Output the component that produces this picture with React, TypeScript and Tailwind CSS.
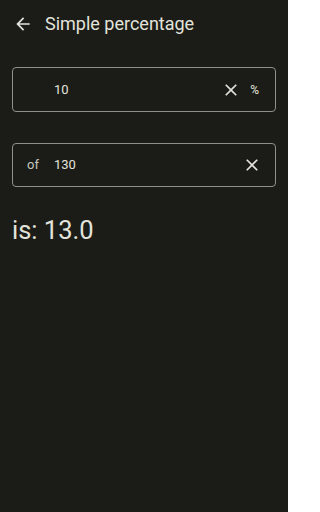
const font = { fontFamily: "Roboto, 'Liberation Sans', sans-serif" }

function ArrowBack() {
  return (
    <svg viewBox="0 0 24 24" className="h-5 w-5" fill="#e3e3db">
      <path d="M20 11H7.83l5.59-5.59L12 4l-8 8 8 8 1.41-1.41L7.83 13H20v-2z" />
    </svg>
  )
}

function Close() {
  return (
    <svg viewBox="0 0 24 24" className="h-5 w-5" fill="#e3e3db">
      <path d="M19 6.41 17.59 5 12 10.59 6.41 5 5 6.41 10.59 12 5 17.59 6.41 19 12 13.41 17.59 19 19 17.59 13.41 12z" />
    </svg>
  )
}

export default function App() {
  return (
    <div className="h-[512px] w-[288px] bg-[#1b1c18] text-[#e3e3db]" style={font}>
      <div className="flex h-12 items-center">
        <div className="ml-[13px] flex w-5 items-center justify-center">
          <ArrowBack />
        </div>
        <h1 className="ml-3 text-[18px] leading-none">Simple percentage</h1>
      </div>

      <div className="mx-3 mt-[19px] flex h-[45px] items-center rounded border border-[#8f9189]">
        <span className="ml-[41px] text-[13px]">10</span>
        <div className="ml-auto mr-[16px] flex items-center">
          <Close />
          <span className="ml-[9px] text-[12px]">%</span>
        </div>
      </div>

      <div className="mx-3 mt-[31px] flex h-[44px] items-center rounded border border-[#8f9189]">
        <span className="ml-[14px] text-[13px] text-[#c5c7be]">of</span>
        <span className="ml-[15px] text-[13px]">130</span>
        <div className="ml-auto mr-[13px]">
          <Close />
        </div>
      </div>

      <p className="mx-3 mt-[28px] text-[25.5px] leading-[30px]">is: 13.0</p>
    </div>
  )
}
